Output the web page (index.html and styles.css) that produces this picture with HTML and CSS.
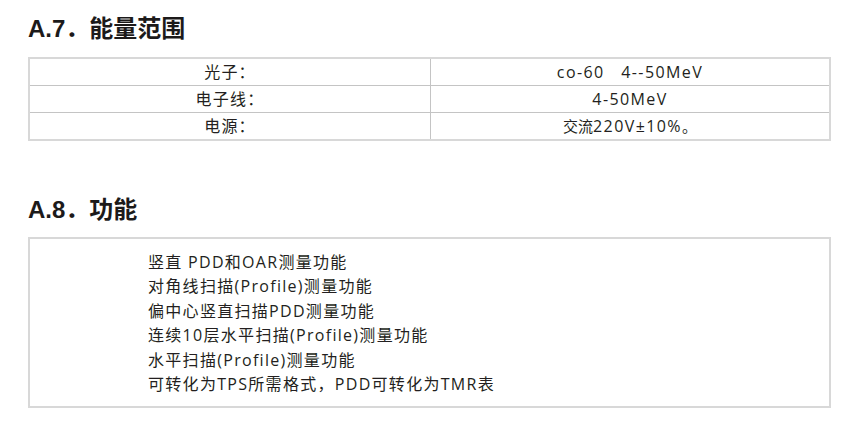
FILE: index.html
```html
<!DOCTYPE html>
<html lang="zh-CN">
<head>
<meta charset="utf-8">
<link rel="stylesheet" href="styles.css">
</head>
<body>
<div class="page">
  <h2 class="sec-title">A.7．能量范围</h2>
  <table class="spec">
    <tr><td>光子：</td><td>co-60&nbsp;&nbsp;&nbsp;4--50MeV</td></tr>
    <tr><td>电子线：</td><td>4-50MeV</td></tr>
    <tr><td>电源：</td><td><span class="narrow">交流</span>220V±10%<span class="narrow">。</span></td></tr>
  </table>
  <h2 class="sec-title sec-title--second">A.8．功能</h2>
  <div class="func-box">
    <ul class="func-list">
      <li>竖直 PDD和OAR测量功能</li>
      <li>对角线扫描(Profile)测量功能</li>
      <li>偏中心竖直扫描PDD测量功能</li>
      <li>连续10层水平扫描(Profile)测量功能</li>
      <li>水平扫描(Profile)测量功能</li>
      <li>可转化为TPS所需格式，PDD可转化为TMR表</li>
    </ul>
  </div>
</div>
</body>
</html>
```
FILE: styles.css
```css
html, body {
  margin: 0;
  padding: 0;
  background: #ffffff;
}
.page {
  width: 803px;
  margin-left: 28px;
  padding-top: 14px;
  font-family: "Open Sans", "Noto Sans CJK SC", sans-serif;
  color: #231f20;
}
.sec-title {
  margin: 0 0 13px 0;
  font-family: "Liberation Sans", "Noto Sans CJK SC", sans-serif;
  font-weight: bold;
  font-size: 24px;
  line-height: 30px;
  color: #1c1a1a;
}
.sec-title--second {
  margin-top: 54px;
  margin-bottom: 12px;
}
.spec {
  width: 803px;
  border-collapse: collapse;
  border: 2px solid #d8d8d8;
  table-layout: fixed;
}
.spec td {
  border: 1px solid #c4c4c4;
  height: 26px;
  padding: 0;
  text-align: center;
  font-size: 16px;
  line-height: 26px;
  letter-spacing: 1.4px;
}
.spec td:first-child {
  width: 400px;
  letter-spacing: 1.2px;
}
.narrow {
  font-size: 15px;
  letter-spacing: 0;
}
.func-box {
  border: 2px solid #d8d8d8;
  padding: 11px 0 10px 118px;
}
.func-list {
  list-style: none;
  margin: 0;
  padding: 0;
  font-size: 16px;
  line-height: 24.4px;
  letter-spacing: 1.3px;
}
```
